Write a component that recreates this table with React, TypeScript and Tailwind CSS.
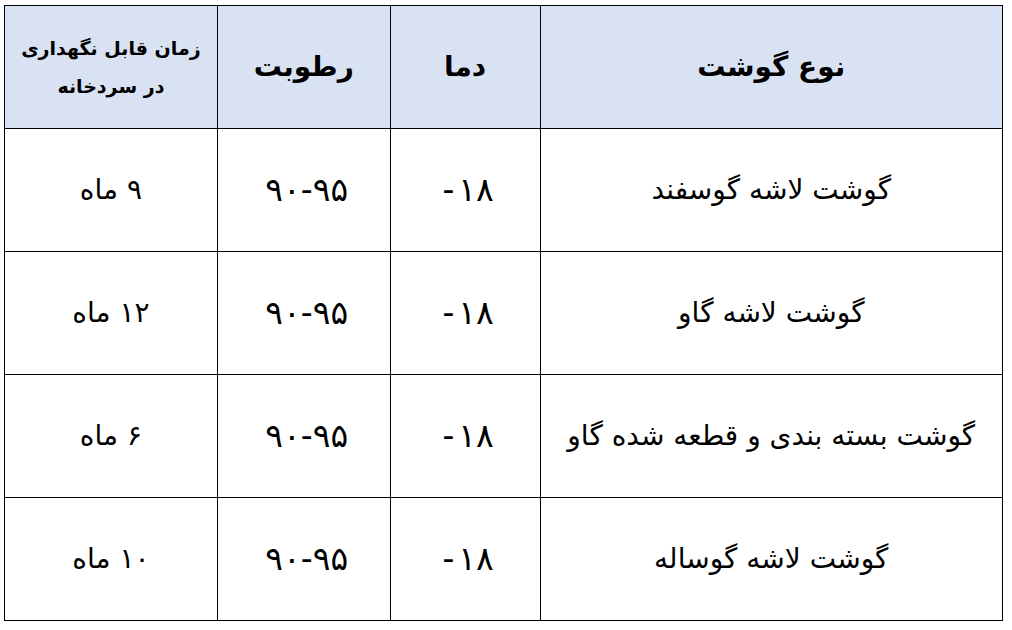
import React from "react";

const rows = [
  { name: "گوشت لاشه گوسفند", temp: "-۱۸", hum: "۹۰-۹۵", time: "۹ ماه" },
  { name: "گوشت لاشه گاو", temp: "-۱۸", hum: "۹۰-۹۵", time: "۱۲ ماه" },
  { name: "گوشت بسته بندی و قطعه شده گاو", temp: "-۱۸", hum: "۹۰-۹۵", time: "۶ ماه" },
  { name: "گوشت لاشه گوساله", temp: "-۱۸", hum: "۹۰-۹۵", time: "۱۰ ماه" },
];

const cell = "border-[1.5px] border-black text-center align-middle";

export default function App() {
  return (
    <div className="w-[1012px] h-[630px] bg-white pt-[5px] pl-[4px]">
      <table
        dir="rtl"
        className="w-[999px] border-collapse text-black"
        style={{ fontFamily: '"DejaVu Sans", sans-serif' }}
      >
        <thead>
          <tr className="h-[123px] bg-[#d9e2f3] font-bold">
            <th className={`${cell} w-[463px] text-[28px]`}>نوع گوشت</th>
            <th className={`${cell} w-[150px] text-[28px]`}>دما</th>
            <th className={`${cell} w-[173px] text-[28px]`}>رطوبت</th>
            <th className={`${cell} w-[213px] text-[19px] leading-[38px]`}>
              زمان قابل نگهداری
              <br />
              در سردخانه
            </th>
          </tr>
        </thead>
        <tbody>
          {rows.map((r, i) => (
            <tr key={i} className="h-[123px] text-[28px]">
              <td className={cell}>{r.name}</td>
              <td className={`${cell} text-[33px]`}>
                <span dir="ltr" className="inline-flex items-center gap-[4px] pl-[6px]">
                  <span>-</span>
                  <span>{r.temp.slice(1)}</span>
                </span>
              </td>
              <td className={`${cell} text-[33px]`}>
                <span dir="ltr" className="pl-[6px]">{r.hum}</span>
              </td>
              <td className={cell}>{r.time}</td>
            </tr>
          ))}
        </tbody>
      </table>
    </div>
  );
}
